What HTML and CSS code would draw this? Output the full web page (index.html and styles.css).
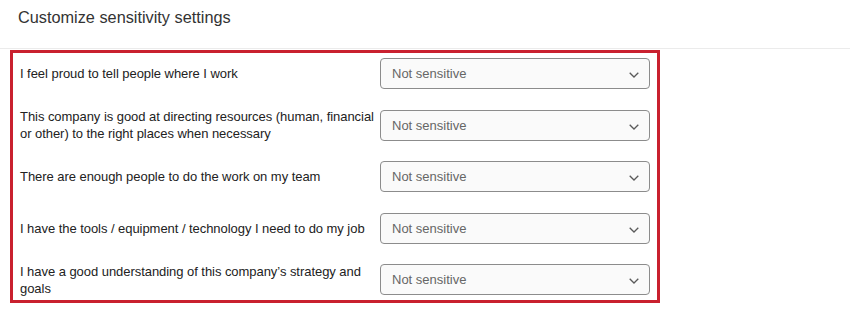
FILE: index.html
```html
<!DOCTYPE html>
<html>
<head>
    <meta charset="UTF-8"/>
    <title>Customize sensitivity settings</title>
    <link rel="stylesheet" href="styles.css">
</head>
<body>

<div class="header">
    <span class="title">Customize sensitivity settings</span>
</div>

<div class="settings">
    <div class="row">
        <span class="label">I feel proud to tell people where I work</span>
        <div class="picker"><span>Not sensitive</span><svg width="10" height="6" viewBox="0 0 10 6"><path d="M0.7 0.8 L5 5 L9.3 0.8" fill="none" stroke="#5a5a5a" stroke-width="1.3"/></svg></div>
    </div>
    <div class="row">
        <span class="label">This company is good at directing resources (human, financial or other) to the right places when necessary</span>
        <div class="picker"><span>Not sensitive</span><svg width="10" height="6" viewBox="0 0 10 6"><path d="M0.7 0.8 L5 5 L9.3 0.8" fill="none" stroke="#5a5a5a" stroke-width="1.3"/></svg></div>
    </div>
    <div class="row">
        <span class="label">There are enough people to do the work on my team</span>
        <div class="picker"><span>Not sensitive</span><svg width="10" height="6" viewBox="0 0 10 6"><path d="M0.7 0.8 L5 5 L9.3 0.8" fill="none" stroke="#5a5a5a" stroke-width="1.3"/></svg></div>
    </div>
    <div class="row">
        <span class="label">I have the tools / equipment / technology I need to do my job</span>
        <div class="picker"><span>Not sensitive</span><svg width="10" height="6" viewBox="0 0 10 6"><path d="M0.7 0.8 L5 5 L9.3 0.8" fill="none" stroke="#5a5a5a" stroke-width="1.3"/></svg></div>
    </div>
    <div class="row">
        <span class="label">I have a good understanding of this company’s strategy and goals</span>
        <div class="picker"><span>Not sensitive</span><svg width="10" height="6" viewBox="0 0 10 6"><path d="M0.7 0.8 L5 5 L9.3 0.8" fill="none" stroke="#5a5a5a" stroke-width="1.3"/></svg></div>
    </div>
</div>

</body>
</html>
```

FILE: styles.css
```css
html, body {
margin: 0;
padding: 0;
background: #fff;
}

body {
font-family: "Liberation Sans", Arial, Helvetica, sans-serif;
color: #2b2b2b;
}

.header {
height: 49px;
border-bottom: 1px solid #ebebeb;
padding-left: 18px;
display: flex;
align-items: center;
box-sizing: border-box;
padding-bottom: 13px;
}

.title {
font-size: 16.3px;
color: #333;
}

.settings {
margin: 1px 0 0 10px;
width: 650px;
box-sizing: border-box;
border: 3px solid #c9202f;
padding: 0 7px;
display: flex;
flex-direction: column;
gap: 10.5px;
}

.row {
display: grid;
grid-template-columns: 1fr 270px;
column-gap: 4px;
align-items: center;
min-height: 41px;
}

.label {
font-size: 13px;
line-height: 17px;
letter-spacing: -0.05px;
color: #222;
}

.picker {
height: 31px;
box-sizing: border-box;
border: 1px solid #8c8c8c;
border-radius: 4px;
background: #fafafa;
display: flex;
align-items: center;
justify-content: space-between;
padding: 0 10px 0 11px;
font-size: 13px;
color: #666;
}

.picker svg {
display: block;
margin-top: 3px;
}
```
